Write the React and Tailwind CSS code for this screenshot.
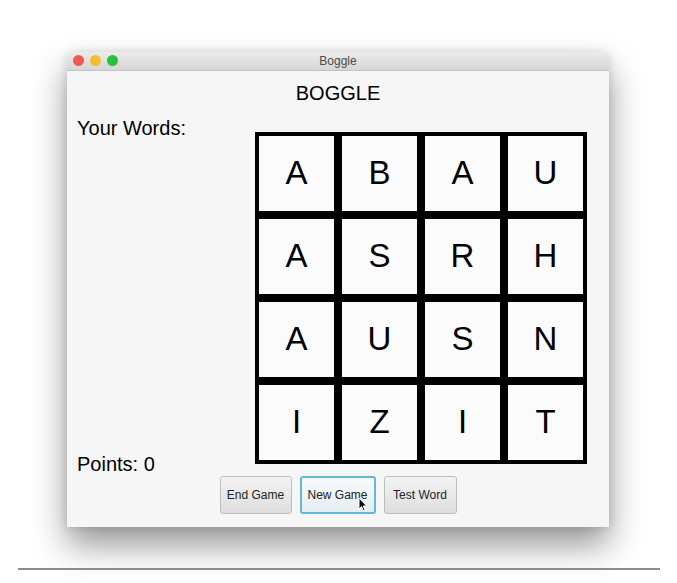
import React from "react";

const letters = [
  ["A", "B", "A", "U"],
  ["A", "S", "R", "H"],
  ["A", "U", "S", "N"],
  ["I", "Z", "I", "T"],
];

const font = { fontFamily: '"Liberation Sans", Arial, sans-serif' };

export default function App() {
  return (
    <div
      className="w-[677px] h-[583px] bg-white overflow-hidden flex flex-col pt-[52px]"
      style={font}
    >
      <div className="ml-[67px] w-[542px] h-[475px] flex flex-col bg-[#f6f6f6] rounded-t-[5px] shadow-[0_18px_34px_rgba(0,0,0,0.42),0_0_10px_rgba(0,0,0,0.12)]">
        {/* title bar */}
        <div className="relative h-[19px] rounded-t-[5px] bg-gradient-to-b from-[#ececec] to-[#d6d6d6] border-b border-[#c2c2c2] flex items-center justify-center">
          <div className="absolute left-[6px] top-[3px] flex gap-[6px]">
            <span className="w-[11px] h-[11px] rounded-full bg-[#ef5b54]" />
            <span className="w-[11px] h-[11px] rounded-full bg-[#f6bd31]" />
            <span className="w-[11px] h-[11px] rounded-full bg-[#26c13f]" />
          </div>
          <span className="text-[12px] text-[#4b4b4b]">Boggle</span>
        </div>

        <div className="pt-[11px] h-[33px] text-[20px] leading-[22px] text-center text-black">
          BOGGLE
        </div>

        <div className="mt-[12px] h-[360px] flex">
          <div className="w-[188px] pl-[10px] flex flex-col justify-between text-[20px] leading-[24px] text-black">
            <div>Your Words:</div>
            <div>Points: 0</div>
          </div>
          <div className="self-center mt-[3px] grid grid-cols-4">
            {letters.flat().map((l, i) => (
              <div
                key={i}
                className="w-[83px] h-[83px] border-4 border-black bg-[#fbfbfb] flex items-center justify-center text-[33px] text-black"
              >
                {l}
              </div>
            ))}
          </div>
        </div>

        <div className="h-[38px] flex justify-center gap-[8px] text-[12px] text-[#222]">
          <button className="w-[72px] h-[38px] rounded-[3px] border border-[#bdbdbd] bg-gradient-to-b from-[#f3f3f3] to-[#dedede]">
            End Game
          </button>
          <button className="relative w-[76px] h-[38px] rounded-[3px] border-2 border-[#62b7dd] bg-gradient-to-b from-[#f7fafb] to-[#e6eef2]">
            New Game
            <svg
              className="absolute left-[56px] top-[19px]"
              width="10"
              height="15"
              viewBox="0 0 10 15"
            >
              <path
                d="M1 1 L1 12 L3.6 9.6 L5.4 13.8 L7 13.1 L5.3 9 L8.6 9 Z"
                fill="#000"
                stroke="#fff"
                strokeWidth="1"
              />
            </svg>
          </button>
          <button className="w-[73px] h-[38px] rounded-[3px] border border-[#bdbdbd] bg-gradient-to-b from-[#f3f3f3] to-[#dedede]">
            Test Word
          </button>
        </div>
      </div>
      <div className="mt-[41px] ml-[18px] w-[642px] h-[2px] bg-[#8c8c8c]" />
    </div>
  );
}
